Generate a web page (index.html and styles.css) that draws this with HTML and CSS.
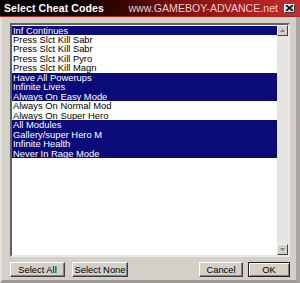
FILE: index.html
```html
<!DOCTYPE html>
<html lang="en">
<head>
  <title>Select Cheat Codes</title>
  <link rel="stylesheet" href="styles.css">
</head>
<body>
  <div class="window">
    <div class="titlebar">
      <span class="title">Select Cheat Codes</span>
      <span class="site">www.GAMEBOY-ADVANCE.net</span>
      <span class="close">
        <svg width="7" height="6" viewBox="0 0 7 6"><path d="M0 0L7 6M7 0L0 6" stroke="#000" stroke-width="1.6"/></svg>
      </span>
    </div>
    <div class="content">
      <div class="listbox">
        <ul class="items">
          <li class="sel">Inf Continues</li>
          <li>Press Slct Kill Sabr</li>
          <li>Press Slct Kill Sabr</li>
          <li>Press Slct Kill Pyro</li>
          <li>Press Slct Kill Magn</li>
          <li class="sel">Have All Powerups</li>
          <li class="sel">Infinite Lives</li>
          <li class="sel">Always On Easy Mode</li>
          <li>Always On Normal Mod</li>
          <li>Always On Super Hero</li>
          <li class="sel">All Modules</li>
          <li class="sel">Gallery/super Hero M</li>
          <li class="sel">Infinite Health</li>
          <li class="sel">Never In Rage Mode</li>
        </ul>
        <div class="scrollbar">
          <div class="sbtn">
            <svg width="5" height="3" viewBox="0 0 5 3"><path d="M0 3L2.5 0L5 3Z" fill="#808080"/></svg>
          </div>
          <div class="track"></div>
          <div class="sbtn">
            <svg width="5" height="3" viewBox="0 0 5 3"><path d="M0 0L2.5 3L5 0Z" fill="#808080"/></svg>
          </div>
        </div>
      </div>
      <div class="buttons">
        <button class="btn w-all">Select All</button>
        <button class="btn w-none">Select None</button>
        <span class="spacer"></span>
        <button class="btn w-cancel">Cancel</button>
        <button class="btn w-ok default">OK</button>
      </div>
    </div>
  </div>
</body>
</html>
```

FILE: styles.css
```css
*{
  padding: 0;
  margin: 0;
  box-sizing: border-box;
  font-family: "Liberation Sans Narrow", "Liberation Sans", Arial, sans-serif;
}
body{
  width: 300px;
  height: 283px;
  overflow: hidden;
  background: #d4d0c8;
}
.window{
  width: 300px;
  height: 283px;
  background: #d4d0c8;
  border-left: 2px solid #e4e2de;
  border-right: 4px solid #a8a6a2;
  border-bottom: 3px solid #9c9a96;
  display: flex;
  flex-direction: column;
}
.titlebar{
  height: 17px;
  margin-left: -2px;
  margin-right: -4px;
  display: flex;
  align-items: center;
  padding-left: 4px;
  background: linear-gradient(90deg, #000 0%, #050000 22%, #3c0404 42%, #7a1010 58%, #a81c1c 80%, #c42c2c 100%);
  border-bottom: 1px solid #b42222;
}
.title{
  color: #fff;
  font-weight: bold;
  font-size: 10.5px;
  letter-spacing: 0.1px;
}
.site{
  margin-left: auto;
  color: #e8cfcf;
  font-size: 10.6px;
}
.close{
  width: 11px;
  height: 9px;
  margin-left: 6px;
  margin-right: 5px;
  background: #d4d0c8;
  border: 1px solid;
  border-color: #fff #404040 #404040 #fff;
  display: flex;
  align-items: center;
  justify-content: center;
}
.content{
  flex: 1;
  padding: 6px 0 0 8px;
  display: flex;
  flex-direction: column;
}
.listbox{
  width: 280px;
  height: 234px;
  display: flex;
  border: 2px solid;
  border-color: #606060 #e8e8e8 #e8e8e8 #606060;
  background: #fff;
}
.items{
  list-style: none;
  flex: 1;
  padding-top: 0.5px;
}
.items li{
  height: 9.48px;
  line-height: 9.48px;
  font-size: 9.4px;
  padding-left: 1px;
  color: #000;
  white-space: nowrap;
}
.items li.sel{
  background: #0a0a78;
  color: #fff;
}
.scrollbar{
  width: 11px;
  display: flex;
  flex-direction: column;
  background: #e6e4e0;
}
.track{
  flex: 1;
}
.sbtn{
  height: 11px;
  background: #d4d0c8;
  border: 1px solid;
  border-color: #f4f4f4 #404040 #404040 #f4f4f4;
  display: flex;
  align-items: center;
  justify-content: center;
}
.buttons{
  display: flex;
  margin-top: 5px;
  width: 280px;
}
.spacer{
  flex: 1;
}
.btn{
  height: 15px;
  background: #d4d0c8;
  border: 1px solid;
  border-color: #fff #404040 #404040 #fff;
  box-shadow: inset -1px -1px 0 #808080;
  font-size: 9.4px;
  color: #000;
}
.w-all{ width: 55px; }
.w-none{ width: 56px; margin-left: 7px; }
.w-cancel{ width: 44px; }
.w-ok{ width: 42px; margin-left: 5px; }
.btn.default{
  border-color: #202020;
  box-shadow: inset 1px 1px 0 #fff, inset -1px -1px 0 #808080;
}
```
